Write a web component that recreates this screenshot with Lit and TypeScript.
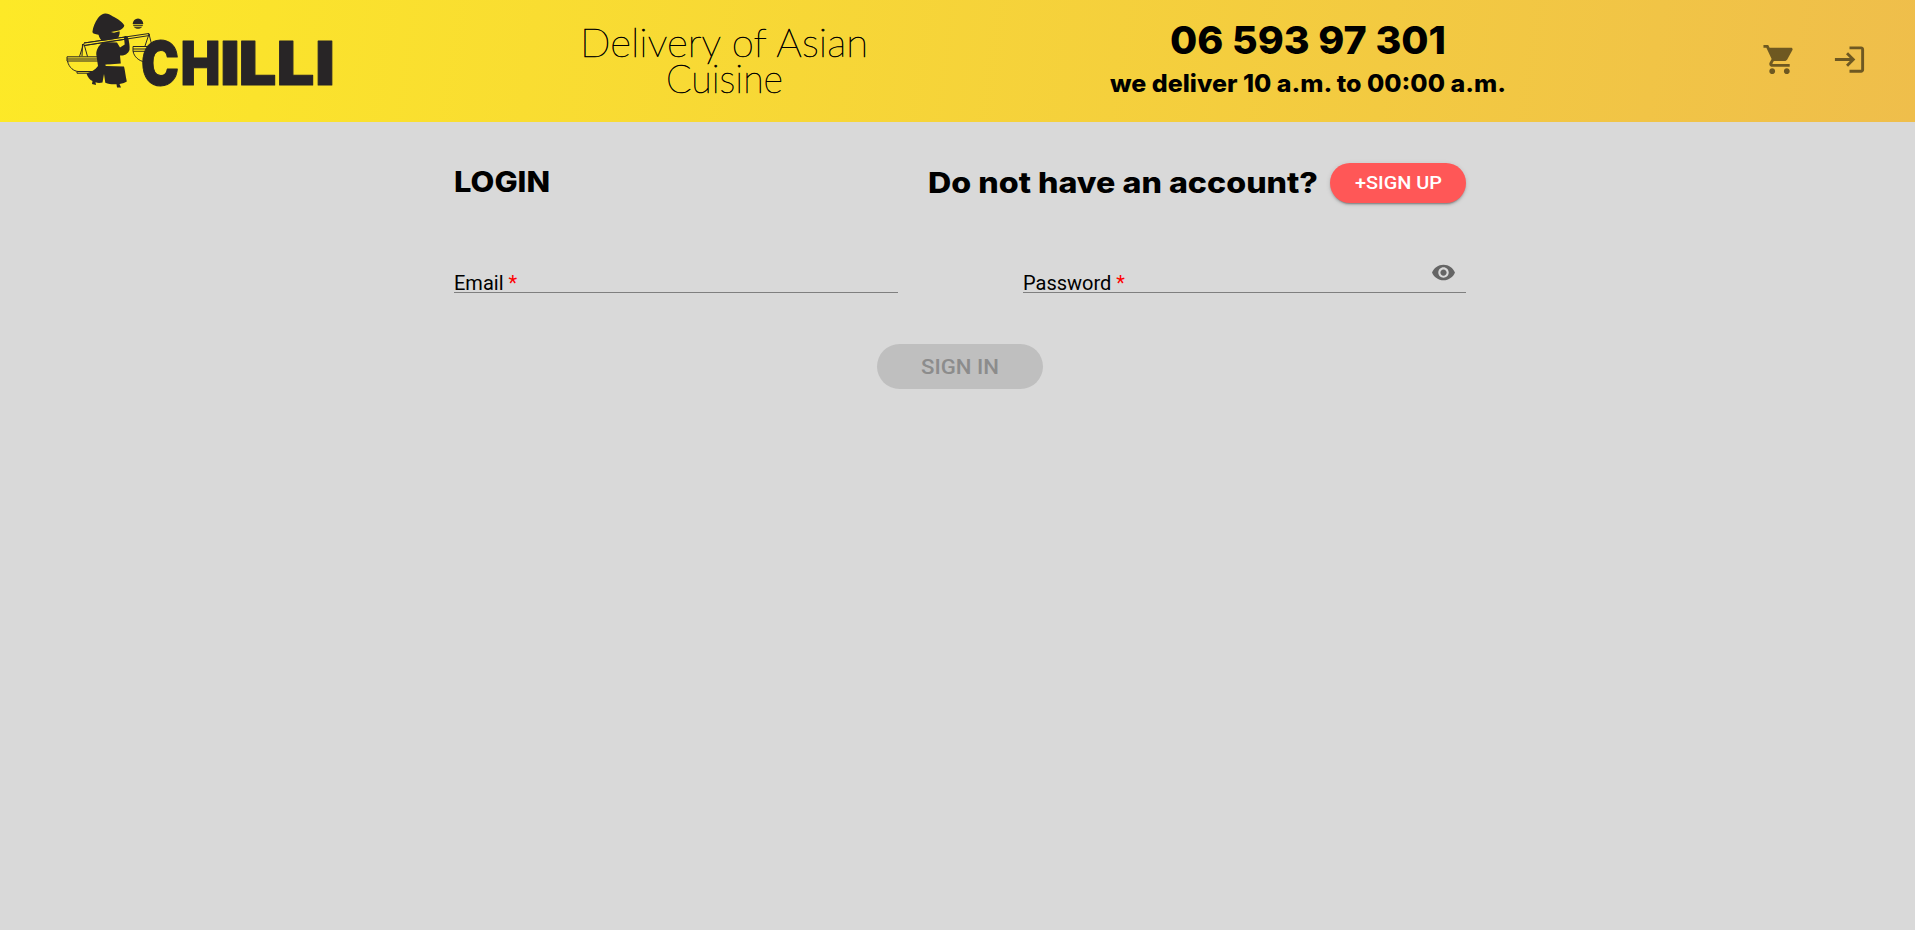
import { LitElement, html, svg, css } from "lit";
import { customElement, property } from "lit/decorators.js";

/** One line of text stretched to an exact width. */
@customElement("fit-text")
class FitText extends LitElement {
  @property() text = "";
  @property({ type: Number }) width = 100;
  @property({ type: Number }) height = 30;
  @property({ type: Number }) size = 20;
  @property({ type: Number }) baseline = 24;
  static styles = css`
    :host { display: block; }
    svg { display: block; overflow: visible; }
    text { font-family: inherit; font-weight: inherit; fill: currentColor; stroke: currentColor; stroke-width: var(--outline, 0); }
  `;
  render() {
    return html`<svg width=${this.width} height=${this.height}>
      ${svg`<text x="0" y=${this.baseline} font-size=${this.size} textLength=${this.width} lengthAdjust="spacingAndGlyphs">${this.text}</text>`}
    </svg>`;
  }
}

const WORDMARK = [
  { ch: "C", x: 141, w: 38 },
  { ch: "H", x: 180.5, w: 40 },
  { ch: "I", x: 220, w: 20 },
  { ch: "L", x: 238.5, w: 38 },
  { ch: "L", x: 276.5, w: 38 },
  { ch: "I", x: 315, w: 20 },
];

@customElement("chilli-logo")
class ChilliLogo extends LitElement {
  static styles = css`
    :host { display: block; }
    svg { display: block; overflow: visible; }
    .ink { fill: #282526; }
    .line { fill: none; stroke: #282526; stroke-width: 1; }
    .gap { stroke: #fce62a; fill: none; stroke-width: 0.9; }
    .word { font-family: Inter, Roboto, sans-serif; font-weight: 900; font-size: 61px; fill: #282526; stroke: #282526; stroke-width: 1; stroke-linejoin: round; }
  `;
  render() {
    return html`<svg width="270" height="80" viewBox="66 12 270 80">
      <path class="line" d="M84 43 L149 33.5 L149.5 35.5 L84.5 45.5 Z M83.5 44 L79.5 56.5 M84 44 L87.5 56.5 M82.5 44 L82 56 M149 34 L145 46 M149 34 L152 46" />
      <path class="line" d="M67 56.8 H99 V61 H67 Z M67 59 H99 M67.5 61 C69 68 74 71 78 71.5 H93 M77 71.5 V73.2 H92" />
      <path class="line" d="M133 46.5 H150 M133 49 H150 M133 51.3 H150 M133 46.5 V51 C134 57 139 61 145 62" />
      <circle class="ink" cx="138" cy="23.6" r="5.2" />
      <path class="gap" d="M132 24.7 H144 M132 26.7 H144" />
      <path class="ink" d="M105 13.4 C102 13.5 100 15.5 98 18 C95 22 93 27 92.4 32 C93 34 95 34 98.5 34.7 C99.5 38 100.5 40 103 41.3 C108 41.5 113 40.5 118.3 37.5 C119.5 35 120 33 119.5 31.3 L114 32.8 L111 32 L119 30.5 C122 29 124 27.8 124.3 25.5 C123 22 117 18.5 113 16.5 C110 14.5 107.5 13.2 105 13.4 Z" />
      <path class="ink" d="M103 42 C98 46 95.5 51 96.5 56 L98 66 C95 70 91 72 86.5 73.5 C87.5 77 90 80 92.5 81 L92 84 L96 85 L95.5 82.3 C98 83.5 101 83 102.5 82.5 L104 74 L105.3 82.7 C109 84 112 84.5 116.5 84.2 L117 87.5 L121 87.6 L119.5 84 C123 83.5 125 82.5 126.8 81.5 C125.5 76 125 70 124 66.5 L106 66 L105 64.8 L120.8 63.6 L120 55.5 C124 56 128 54 129.5 50 C130 46 129 42 128.4 38.5 C127 35.5 125 35.5 124 37.5 L124.7 44.5 L120 47.5 L117 42.5 L103 42 Z" />
      <path class="gap" d="M106.5 65 C112 66 116 65.5 121 64.7 M84 44.2 L122 38.4" />
      <path class="line" d="M84 43 L126 36.9 M84 45.5 L126 39.1" />
      <text class="word" y="85">${WORDMARK.map((l) => svg`<tspan x=${l.x} textLength=${l.w} lengthAdjust="spacingAndGlyphs">${l.ch}</tspan>`)}</text>
    </svg>`;
  }
}

@customElement("app-root")
class AppRoot extends LitElement {
  static styles = css`
    :host { display: block; min-height: 100vh; background: #d9d9d9; color: #000; font-family: Roboto, sans-serif; }
    * { box-sizing: border-box; }
    header { height: 122px; display: flex; align-items: flex-start; background: linear-gradient(98deg, #fde927, #efbe4b); }
    chilli-logo { margin: 12px 0 0 66px; }
    .slogan { --outline: 0.6px; width: 288px; margin: 20px 0 0 244px; display: flex; flex-direction: column; align-items: center; font-family: Lato, sans-serif; font-weight: 100; }
    .contact { width: 396px; margin: 18px 0 0 242px; display: flex; flex-direction: column; align-items: center; gap: 5px; font-family: Inter, Roboto, sans-serif; font-weight: 800; }
    .icons { display: flex; gap: 35px; margin: 42px 48px 0 auto; }
    .icons svg { display: block; width: 35px; height: 35px; fill: rgba(0, 0, 0, 0.54); }
    main { width: 1012px; margin-left: 454px; padding-top: 41px; }
    .top { display: flex; justify-content: space-between; height: 40px; font-family: Inter, Roboto, sans-serif; font-weight: 800; }
    .ask { display: flex; gap: 12px; }
    button { border: 0; padding: 0; font-family: Roboto, sans-serif; font-weight: 500; display: flex; align-items: center; justify-content: center; }
    .up { width: 136px; height: 40px; border-radius: 20px; background: #ff5757; color: #fff; box-shadow: 0 3px 1px -2px rgba(0,0,0,.2), 0 2px 2px rgba(0,0,0,.14), 0 1px 5px rgba(0,0,0,.12); }
    .fields { display: grid; grid-template-columns: 444px 443px; justify-content: space-between; margin-top: 54px; }
    .field { height: 36px; display: flex; justify-content: space-between; align-items: flex-end; border-bottom: 1px solid #7f7f7f; }
    .label { display: flex; gap: 5px; font-size: 20px; line-height: 18px; }
    .star { color: #f00; }
    .eye { width: 25px; height: 25px; margin: 0 10px 7px 0; fill: #656565; }
    .in { width: 166px; height: 45px; border-radius: 23px; background: #bfbfbf; color: #8c8c8c; margin: 51px 0 0 423px; }
  `;
  render() {
    return html`
      <header>
        <chilli-logo></chilli-logo>
        <div class="slogan">
          <fit-text text="Delivery of Asian" width="288" height="36" size="40" baseline="36.8"></fit-text>
          <fit-text text="Cuisine" width="117" height="36" size="40" baseline="36.8"></fit-text>
        </div>
        <div class="contact">
          <fit-text text="06 593 97 301" width="276" height="36" size="38.5" baseline="36"></fit-text>
          <fit-text text="we deliver 10 a.m. to 00:00 a.m." width="396" height="34" size="24" baseline="33"></fit-text>
        </div>
        <div class="icons">
          <svg viewBox="0 0 24 24"><path d="M7 18c-1.1 0-1.99.9-1.99 2S5.9 22 7 22s2-.9 2-2-.9-2-2-2zM1 2v2h2l3.6 7.59-1.35 2.45c-.16.28-.25.61-.25.96 0 1.1.9 2 2 2h12v-2H7.42c-.14 0-.25-.11-.25-.25l.03-.12.9-1.63h7.45c.75 0 1.41-.41 1.75-1.03l3.58-6.49c.08-.14.12-.31.12-.48 0-.55-.45-1-1-1H5.21l-.94-2H1zm16 16c-1.1 0-1.99.9-1.99 2s.89 2 1.99 2 2-.9 2-2-.9-2-2-2z"/></svg>
          <svg viewBox="0 0 24 24"><path d="M11 7L9.6 8.4l2.6 2.6H2v2h10.2l-2.6 2.6L11 17l5-5-5-5zm9 12h-8v2h8c1.1 0 2-.9 2-2V5c0-1.1-.9-2-2-2h-8v2h8v14z"/></svg>
        </div>
      </header>
      <main>
        <div class="top">
          <fit-text text="LOGIN" width="96" height="40" size="28.5" baseline="29"></fit-text>
          <div class="ask">
            <fit-text text="Do not have an account?" width="390" height="40" size="28.5" baseline="30"></fit-text>
            <button class="up"><fit-text text="+SIGN UP" width="87" height="20" size="19" baseline="15.5"></fit-text></button>
          </div>
        </div>
        <div class="fields">
          <div class="field"><div class="label"><span>Email</span><span class="star">*</span></div></div>
          <div class="field">
            <div class="label"><span>Password</span><span class="star">*</span></div>
            <svg class="eye" viewBox="0 0 24 24"><path d="M12 4.5C7 4.5 2.73 7.61 1 12c1.73 4.39 6 7.5 11 7.5s9.27-3.11 11-7.5c-1.73-4.39-6-7.5-11-7.5zM12 17c-2.76 0-5-2.24-5-5s2.24-5 5-5 5 2.24 5 5-2.24 5-5 5zm0-8c-1.66 0-3 1.34-3 3s1.34 3 3 3 3-1.34 3-3-1.34-3-3-3z"/></svg>
          </div>
        </div>
        <button class="in" disabled><fit-text text="SIGN IN" width="78" height="20" size="20" baseline="17"></fit-text></button>
      </main>
    `;
  }
}
